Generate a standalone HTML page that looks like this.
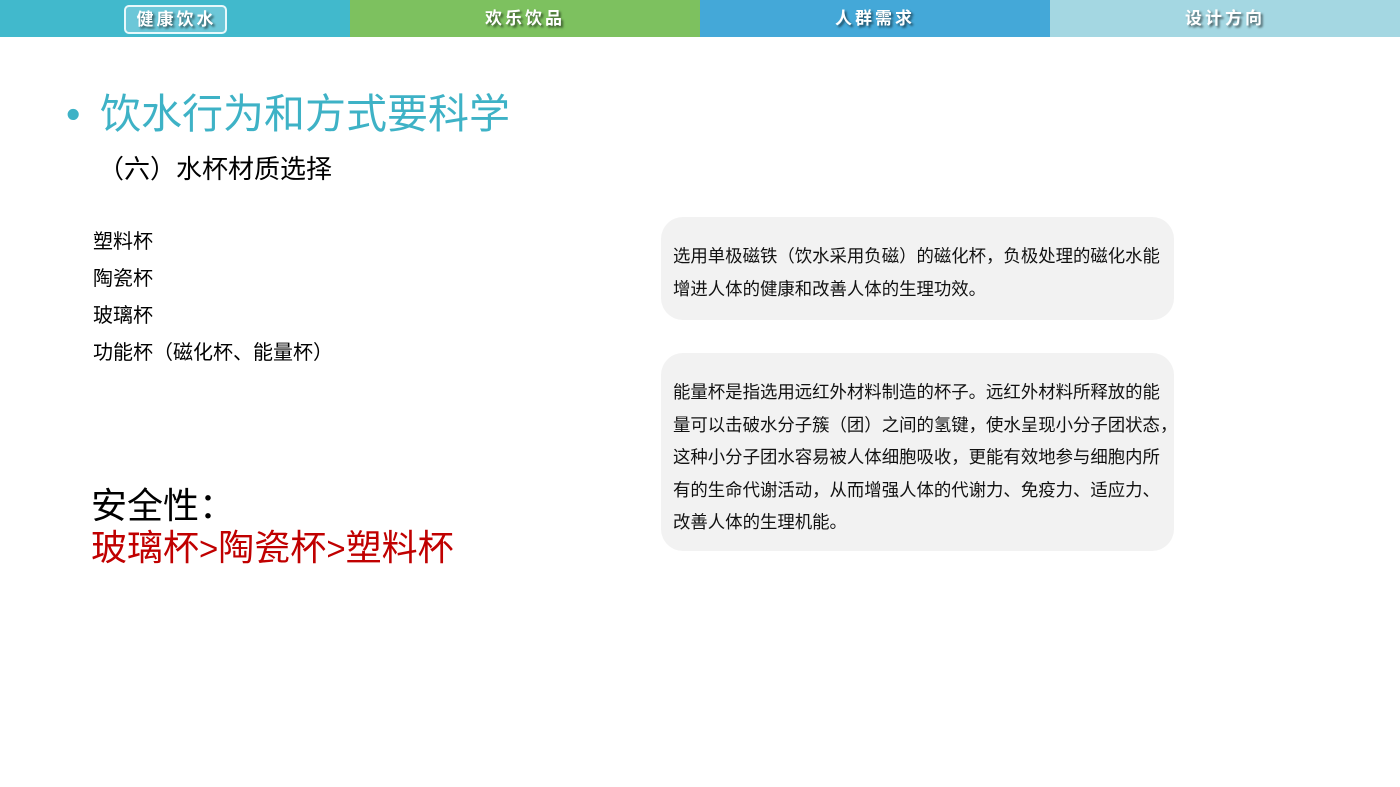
<!DOCTYPE html>
<html><head><meta charset="utf-8"><style>
*{margin:0;padding:0;box-sizing:border-box}
body{width:1400px;height:787px;background:#fff;position:relative;overflow:hidden;font-family:"Liberation Sans","Noto Sans CJK SC",sans-serif;color:#000}
.nav{position:absolute;top:0;height:37px;color:#fff;font-weight:bold;font-size:17px;text-align:center;line-height:37px;letter-spacing:3px;text-shadow:2px 2px 2px rgba(0,0,0,.55)}
.a{position:absolute}
.card{position:absolute;left:661px;width:513px;background:#f2f2f2;border-radius:22px;font-size:17.4px;line-height:32.5px;padding-left:12px;color:#111;white-space:nowrap}
</style></head><body>
<div class="nav" style="left:0;width:350px;background:#41b9cc"><span style="display:inline-block;border:2px solid #e8f8fb;border-radius:5px;line-height:25px;margin-top:5px;padding:0 8px 0 11px;background:#6cc7d8">健康饮水</span></div>
<div class="nav" style="left:350px;width:350px;background:#7dc15f">欢乐饮品</div>
<div class="nav" style="left:700px;width:350px;background:#44a8d8">人群需求</div>
<div class="nav" style="left:1050px;width:350px;background:#a4d7e2">设计方向</div>
<div class="a" style="left:66px;top:82px;font-size:41px;color:#3eb2c6;line-height:64px"><span style="display:inline-block;width:34px">•</span>饮水行为和方式要科学</div>
<div class="a" style="left:98px;top:152px;font-size:26px;line-height:34px">（六）水杯材质选择</div>
<div class="a" style="left:93px;top:224px;font-size:20px;line-height:37px">塑料杯<br>陶瓷杯<br>玻璃杯<br>功能杯（磁化杯、能量杯）</div>
<div class="a" style="left:91px;top:485px;font-size:36px;line-height:42px">安全性：<br><span style="color:#c00000">玻璃杯<span style="font-size:33px">&gt;</span>陶瓷杯<span style="font-size:33px">&gt;</span>塑料杯</span></div>
<div class="card" style="top:217px;height:103px;padding-top:23px">选用单极磁铁（饮水采用负磁）的磁化杯，负极处理的磁化水能<br>增进人体的健康和改善人体的生理功效。</div>
<div class="card" style="top:353px;height:198px;padding-top:23px">能量杯是指选用远红外材料制造的杯子。远红外材料所释放的能<br>量可以击破水分子簇（团）之间的氢键，使水呈现小分子团状态，<br>这种小分子团水容易被人体细胞吸收，更能有效地参与细胞内所<br>有的生命代谢活动，从而增强人体的代谢力、免疫力、适应力、<br>改善人体的生理机能。</div>
</body></html>
